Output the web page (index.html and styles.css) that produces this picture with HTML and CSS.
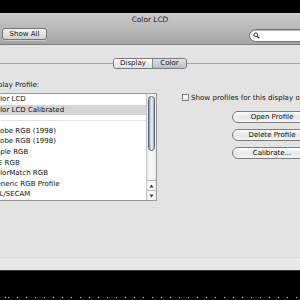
FILE: index.html
```html
<!DOCTYPE html>
<html>
<head>
<meta charset="utf-8">
<link rel="stylesheet" href="styles.css">
</head>
<body>
<div class="window">
  <div class="toolbar">
    <div class="title">Color LCD</div>
    <div class="tool-row">
      <button class="btn-showall">Show All</button>
      <div class="search">
        <svg class="mag" width="7" height="7" viewBox="0 0 7 7"><circle cx="2.8" cy="2.8" r="1.9" fill="none" stroke="#333" stroke-width="1"/><line x1="4.2" y1="4.2" x2="6.3" y2="6.3" stroke="#333" stroke-width="1.3"/></svg>
      </div>
    </div>
  </div>
  <div class="content">
    <div class="tabbar">
      <div class="tabline"></div>
      <div class="segmented">
        <div class="seg">Display</div>
        <div class="seg seg-on">Color</div>
      </div>
      <div class="tabline"></div>
    </div>
    <div class="pane">
      <div class="label">Display Profile:</div>
      <div class="main">
        <div class="listbox">
          <div class="rows">
            <div class="row">Color LCD</div>
            <div class="row row-sel">Color LCD Calibrated</div>
            <div class="row row-sep"><span></span></div>
            <div class="row">Adobe RGB (1998)</div>
            <div class="row">Adobe RGB (1998)</div>
            <div class="row">Apple RGB</div>
            <div class="row">CIE RGB</div>
            <div class="row">ColorMatch RGB</div>
            <div class="row">Generic RGB Profile</div>
            <div class="row">PAL/SECAM</div>
          </div>
          <div class="scrollbar">
            <div class="track"><div class="thumb"></div></div>
            <div class="arrow">
              <svg width="5" height="4" viewBox="0 0 5 4"><path d="M2.5 0.5 L4.5 3.5 L0.5 3.5 Z" fill="#333"/></svg>
            </div>
            <div class="arrow">
              <svg width="5" height="4" viewBox="0 0 5 4"><path d="M0.5 0.5 L4.5 0.5 L2.5 3.5 Z" fill="#333"/></svg>
            </div>
          </div>
        </div>
        <div class="side">
          <label class="check"><span class="box"></span><span class="check-text">Show profiles for this display only</span></label>
          <div class="buttons">
            <button class="pill">Open Profile</button>
            <button class="pill">Delete Profile</button>
            <button class="pill">Calibrate...</button>
          </div>
        </div>
      </div>
    </div>
  </div>
  <div class="footer"></div>
</div>
<div class="dots"></div>
</body>
</html>
```
FILE: styles.css
```css
html, body {
  margin: 0;
  padding: 0;
}
body {
  width: 300px;
  height: 300px;
  overflow: hidden;
  background: #000;
  font-family: "Lucida Grande", "DejaVu Sans", sans-serif;
  font-size: 7px;
  color: #111;
}
.window {
  margin-top: 13px;
  width: 300px;
  height: 257px;
  overflow: hidden;
  display: flex;
  flex-direction: column;
  border-bottom: 1px solid #3a3a3a;
}
.toolbar {
  height: 31px;
  background: linear-gradient(#cbcbcb, #a4a4a4);
  border-bottom: 1px solid #7d7d7d;
  display: flex;
  flex-direction: column;
}
.title {
  height: 13px;
  line-height: 13px;
  text-align: center;
  font-size: 7.4px;
  color: #1a1a1a;
}
.tool-row {
  margin-top: 2px;
  display: flex;
  align-items: flex-start;
  justify-content: space-between;
  padding-left: 2px;
}
.btn-showall {
  width: 45px;
  height: 12px;
  padding: 0;
  margin: 0;
  font: inherit;
  font-size: 7px;
  color: #111;
  border: 1px solid #777;
  border-radius: 3px;
  background: linear-gradient(#f4f4f4, #d0d0d0);
  box-shadow: 0 1px 0 rgba(255,255,255,0.35);
}
.search {
  margin-top: 1px;
  width: 66px;
  height: 11px;
  margin-right: -20px;
  background: #fff;
  border: 1px solid #6e6e6e;
  border-radius: 7px;
  box-shadow: inset 0 1px 1px rgba(0,0,0,0.3);
  display: flex;
  align-items: center;
  padding-left: 3px;
}
.mag { display: block; }
.content {
  flex: 1;
  background: #e3e3e3;
  display: flex;
  flex-direction: column;
}
.tabbar {
  margin-top: 13px;
  height: 11px;
  display: flex;
  align-items: center;
}
.tabline {
  flex: 1;
  height: 1px;
  background: #a9a9a9;
}
.segmented {
  display: flex;
  height: 11px;
  border: 1px solid #7a7a7a;
  border-radius: 3px;
  overflow: hidden;
  box-sizing: border-box;
}
.seg {
  padding: 0 5px;
  line-height: 9px;
  background: linear-gradient(#fdfdfd, #dedede);
  font-size: 7px;
}
.seg:first-child { width: 28px; text-align: center; border-right: 1px solid #888; }
.seg-on {
  width: 23px;
  text-align: center;
  background: linear-gradient(#dfe4ea, #b6bfca);
}
.pane {
  margin-left: -14px;
}
.label {
  margin-top: 11px;
  height: 10px;
  line-height: 10px;
  padding-left: 1px;
}
.main {
  margin-top: 3px;
  display: flex;
  align-items: flex-start;
}
.listbox {
  flex: none;
  width: 171px;
  height: 108px;
  box-sizing: border-box;
  border: 1px solid #9a9a9a;
  background: #fff;
  display: flex;
}
.rows {
  flex: 1;
}
.row {
  height: 10.6px;
  line-height: 10.6px;
  padding-left: 4px;
  white-space: nowrap;
}
.row-sel {
  background: #d5d5d5;
}
.row-sep {
  display: flex;
  align-items: center;
}
.row-sep span {
  display: block;
  flex: 1;
  height: 1px;
  background: #e2e2e2;
  margin-left: 10px;
}
.scrollbar {
  width: 9px;
  border-left: 1px solid #c8c8c8;
  display: flex;
  flex-direction: column;
  background: linear-gradient(90deg, #e9e9e9, #fafafa 50%, #e9e9e9);
}
.track {
  flex: 1;
  padding-top: 2px;
}
.thumb {
  margin: 0 1px 0 0.5px;
  height: 55px;
  border-radius: 4px;
  border: 1px solid #55657d;
  box-sizing: border-box;
  background: linear-gradient(90deg, #8a9ab3, #d5dde9 40%, #eef2f8 55%, #9fb0c8);
}
.arrow {
  height: 9px;
  border-top: 1px solid #b8b8b8;
  display: flex;
  align-items: center;
  justify-content: center;
  background: linear-gradient(90deg, #ececec, #fff, #ececec);
}
.arrow svg { display: block; }
.side {
  flex: none;
  margin-left: 25px;
  display: flex;
  flex-direction: column;
}
.check {
  display: flex;
  align-items: center;
  height: 9px;
  white-space: nowrap;
  font-size: 7.1px;
}
.box {
  width: 7px;
  height: 7px;
  box-sizing: border-box;
  border: 1px solid #7f7f7f;
  background: linear-gradient(#fff, #e6e6e6);
  margin-right: 2px;
  flex: none;
}
.buttons {
  margin-top: 9px;
  margin-left: 50px;
  display: flex;
  flex-direction: column;
  gap: 6px;
}
.pill {
  width: 80px;
  height: 12px;
  padding: 0;
  margin: 0;
  font: inherit;
  font-size: 7px;
  color: #111;
  border: 1px solid #7d7d7d;
  border-radius: 6px;
  background: linear-gradient(#ffffff, #e6e6e6 50%, #f6f6f6);
  text-align: center;
}
.footer {
  height: 12px;
  background: #e8e8e8;
  border-top: 1px solid #dadada;
}
.dots {
  margin-top: 26px;
  height: 1px;
  background: repeating-linear-gradient(90deg, #ddd 0 1px, transparent 1px 9px);
  background-position: 8px 0;
}
```
